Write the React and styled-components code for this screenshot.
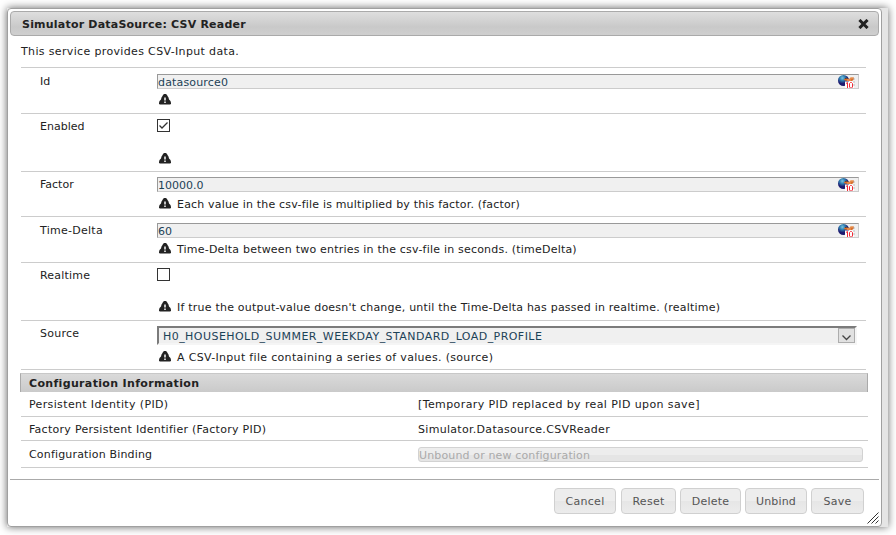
import React from "react";
import styled, { createGlobalStyle } from "styled-components";

const Global = createGlobalStyle`
  * { box-sizing: border-box; }
  body {
    margin: 0;
    background: #fff;
    color: #222;
    font: 11px/14px Verdana, "DejaVu Sans", sans-serif;
    overflow: hidden;
  }
  #root { display: flow-root; height: 535px; }
`;

const Backdrop = styled.div`
  width: 881px;
  height: 519px;
  margin: 8px 0 0 7px;
  background: #e5e5e5;
  box-shadow: 0 0 8px #666;
`;

const Dialog = styled.section`
  position: relative;
  display: flex;
  flex-direction: column;
  width: 875px;
  height: 519px;
  padding: 2px;
  background: #fff;
  border: 1px solid #a0a0a0;
  border-radius: 4px;
`;

const TitleBar = styled.header`
  display: flex;
  align-items: center;
  justify-content: space-between;
  flex: none;
  height: 25px;
  padding: 0 9px 0 11px;
  font-weight: bold;
  border: 1px solid #aaa;
  border-radius: 4px;
  background: linear-gradient(#dedede, #c9c9c9 65%, #cfcfcf);
`;

const Text = styled.span`
  display: block;
  height: 14px;
  line-height: 16px;
  white-space: nowrap;
  letter-spacing: ${(p) => p.$track || 0}px;
`;

const Intro = styled.div`
  flex: none;
  height: 31px;
  padding: 8px 0 0 11px;
`;

const Fields = styled.div`
  width: 845px;
  margin-left: 11px;
  flex: none;
  border-top: 1px solid #ccc;
`;

const Row = styled.div`
  display: grid;
  grid-template-columns: 117px 1fr;
  height: ${(p) => p.$height}px;
  padding: ${(p) => p.$top}px 7px 0 19px;
  border-bottom: 1px solid #ccc;
`;

const Control = styled.div`
  display: flex;
  flex-direction: column;
  justify-content: space-between;
  align-items: flex-start;
  padding-bottom: ${(p) => p.$bottom}px;
`;

const Input = styled.div`
  display: flex;
  justify-content: space-between;
  width: 702px;
  height: 15px;
  padding: 0 2px 0 0;
  color: #1c4257;
  background: #f0f0f0;
  border: 1px solid #ccc;
  border-top-color: #999;
  border-left-color: #999;
`;

const Check = styled.div`
  width: 13px;
  height: 13px;
  border: 1px solid #333;
  svg { display: block; }
`;

const Select = styled.div`
  display: flex;
  justify-content: space-between;
  width: 700px;
  height: 19px;
  padding: 0 0 0 4px;
  color: #1c4257;
  background: #f0f0f0;
  border: 2px solid #f5f5f5;
  border-top-color: #7b7b7b;
  border-left-color: #7b7b7b;
  ${Text} { margin-top: 1px; }
`;

const Arrow = styled.div`
  display: grid;
  place-items: center;
  width: 17px;
  height: 15px;
  padding-top: 4px;
  border: 1px solid #adadad;
  background: #e1e1e1;
`;

const Help = styled.div`
  display: flex;
  gap: 6px;
  height: 14px;
  padding-left: 2px;
  svg { display: block; flex: none; margin-top: 1px; }
`;

const InfoTitle = styled.h3`
  flex: none;
  width: 848px;
  height: 19px;
  margin: 3px 0 0 10px;
  padding: 2px 0 0 8px;
  font-size: 11px;
  border: solid #aaa;
  border-width: 1px 1px 0;
  border-top-color: #c8c8c8;
  background: linear-gradient(#dadada, #cacaca);
`;

const InfoRow = styled.div`
  flex: none;
  display: grid;
  grid-template-columns: 389px 1fr;
  width: 847px;
  height: ${(p) => p.$height}px;
  margin-left: 11px;
  padding: ${(p) => p.$top}px 5px 0 8px;
  border-bottom: 1px solid #ccc;
`;

const Binding = styled.div`
  height: 15px;
  color: #aaa;
  border: 1px solid #d2d2d2;
  border-radius: 3px;
  background: linear-gradient(#ededed 50%, #e5e5e5 50%);
`;

const Footer = styled.footer`
  display: flex;
  justify-content: flex-end;
  gap: 4px;
  flex: none;
  height: 46px;
  margin-top: 11px;
  padding: 8px 15px 0 0;
  border-top: 1px solid #aaa;
`;

const Button = styled.button`
  width: ${(p) => p.$width}px;
  height: 26px;
  padding: 0;
  display: grid;
  place-items: center;
  font: inherit;
  color: #555;
  border: 1px solid #d0d0d0;
  border-radius: 4px;
  background: linear-gradient(#ededed 50%, #e6e6e6 50%, #ececec);
  &:first-child { margin-right: 1px; }
`;

const Grip = styled.svg`
  position: absolute;
  right: 2px;
  bottom: 2px;
`;

const CloseIcon = () => (
  <svg width="11" height="10" viewBox="0 0 11 10">
    <path d="M2.5 2 8.5 8M8.5 2 2.5 8" stroke="#222" strokeWidth="3" strokeLinecap="square" />
  </svg>
);

const WarningIcon = () => (
  <svg width="12" height="11" viewBox="0 0 12 11">
    <path d="M5 0h2l1 1 .5 1 1 1.5.5 2L11.5 7 12 9v1l-1 .5H1L0 10V9l.5-2L2 5.5l.5-2 1-1.5L4 1z" fill="#222" />
    <path d="M5.2 3.5h1.6v3H5.2zM5.2 7.5h1.6V9H5.2z" fill="#eee" />
  </svg>
);

const FieldBadge = () => (
  <svg width="18" height="13" viewBox="0 0 18 13">
    <defs>
      <radialGradient id="globe" cx=".4" cy=".28">
        <stop offset="0" stopColor="#7cc6e4" />
        <stop offset=".5" stopColor="#2e7cad" />
        <stop offset="1" stopColor="#1d1a70" />
      </radialGradient>
    </defs>
    <circle cx="5.5" cy="5.5" r="5.5" fill="url(#globe)" />
    <path d="M7 3h3v2H7z" fill="#342b38" />
    <path d="M6 4q3-1 5 0l2-1.5h3v2L14 6H9L6 5z" fill="#d8702e" />
    <path d="M12 3h3M9 5h4" stroke="#f2a261" />
    <path d="M7 6.5h9V13H7z" fill="#fff" />
    <path d="M15 4h2M15 7h2M15 10h2" stroke="#bbb" />
    <path d="M8 8.5l1.5-1V13M11.5 8.5l1-1h1l1 1V12l-1 1h-1l-1-1z" fill="none" stroke="#f12b38" />
  </svg>
);

const fields = [
  { label: "Id", height: 46, top: 6, bottom: 6, value: "datasource0", valueTrack: 0.16 },
  { label: "Enabled", height: 58, top: 5, bottom: 5, checkbox: true, checked: true },
  { label: "Factor", height: 45, top: 5, bottom: 5, value: "10000.0", help: "Each value in the csv-file is multiplied by this factor. (factor)", helpTrack: 0.18 },
  { label: "Time-Delta", labelTrack: 0.27, height: 46, top: 6, bottom: 6, value: "60", help: "Time-Delta between two entries in the csv-file in seconds. (timeDelta)", helpTrack: 0.205 },
  { label: "Realtime", labelTrack: 0.2, height: 58, top: 5, bottom: 6, checkbox: true, help: "If true the output-value doesn't change, until the Time-Delta has passed in realtime. (realtime)", helpTrack: 0.218 },
  { label: "Source", labelTrack: 0.25, height: 49, top: 5, bottom: 5, select: "H0_HOUSEHOLD_SUMMER_WEEKDAY_STANDARD_LOAD_PROFILE", help: "A CSV-Input file containing a series of values. (source)", helpTrack: 0.32 },
];

const actions = [["Cancel", 62, 0.3], ["Reset", 55, 0.3], ["Delete", 61, 0.2], ["Unbind", 62, 0.15], ["Save", 53, 0.2]];

function Field({ field }) {
  return (
    <Row $height={field.height} $top={field.top}>
      <Text $track={field.labelTrack}>{field.label}</Text>
      <Control $bottom={field.bottom}>
        {field.checkbox && (
          <Check>
            {field.checked && (
              <svg width="11" height="11"><path d="m1.5 5.5 2.5 2.5 5.5-5.5" fill="none" stroke="#333" strokeWidth="1.3" /></svg>
            )}
          </Check>
        )}
        {field.value && <Input><Text $track={field.valueTrack}>{field.value}</Text><FieldBadge /></Input>}
        {field.select && (
          <Select>
            <Text $track={0.45}>{field.select}</Text>
            <Arrow><svg width="9" height="6"><path d="m.5.5 4 4 4-4" fill="none" stroke="#444" strokeWidth="1.3" /></svg></Arrow>
          </Select>
        )}
        <Help><WarningIcon /><Text $track={field.helpTrack}>{field.help}</Text></Help>
      </Control>
    </Row>
  );
}

export default function App() {
  return (
    <>
      <Global />
      <Backdrop>
        <Dialog>
          <TitleBar><Text $track={0.21}>Simulator DataSource: CSV Reader</Text><CloseIcon /></TitleBar>
          <Intro><Text $track={0.35}>This service provides CSV-Input data.</Text></Intro>
          <Fields>{fields.map((f) => <Field key={f.label} field={f} />)}</Fields>
          <InfoTitle><Text $track={0.34}>Configuration Information</Text></InfoTitle>
          <InfoRow $height={25} $top={5}>
            <Text $track={0.36}>Persistent Identity (PID)</Text>
            <Text $track={0.4}>[Temporary PID replaced by real PID upon save]</Text>
          </InfoRow>
          <InfoRow $height={24} $top={5}>
            <Text $track={0.28}>Factory Persistent Identifier (Factory PID)</Text>
            <Text $track={0.3}>Simulator.Datasource.CSVReader</Text>
          </InfoRow>
          <InfoRow $height={27} $top={6}>
            <Text $track={0.17}>Configuration Binding</Text>
            <Binding><Text $track={0.14}>Unbound or new configuration</Text></Binding>
          </InfoRow>
          <Footer>
            {actions.map(([name, width, track]) => (
              <Button key={name} $width={width}><Text $track={track}>{name}</Text></Button>
            ))}
          </Footer>
          <Grip width="12" height="12"><path d="m.5 11.5 11-11M4.5 11.5l7-7M8.5 11.5l3-3" stroke="#333" /></Grip>
        </Dialog>
      </Backdrop>
    </>
  );
}
